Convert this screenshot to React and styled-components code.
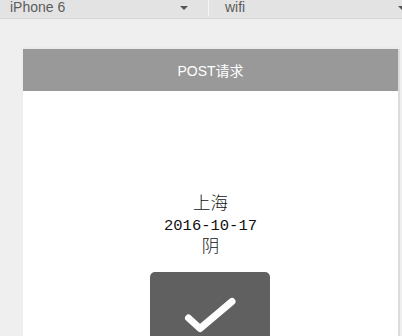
import React from "react";
import styled, { createGlobalStyle } from "styled-components";

const Global = createGlobalStyle`
  html, body { margin: 0; padding: 0; background: #efefef; overflow: hidden; }
  body { width: 402px; height: 336px; font-family: "Liberation Sans", Arial, sans-serif; }
`;

const Page = styled.div`
  width: 402px;
  height: 336px;
  overflow: hidden;
  background: #efefef;
  display: flex;
  flex-direction: column;
`;

const Toolbar = styled.div`
  height: 19px;
  flex: none;
  display: flex;
  background: #e3e3e3;
  border-bottom: 1px solid #d6d6d6;
  box-sizing: border-box;
`;

const Select = styled.div`
  width: ${(p) => p.$w}px;
  flex: none;
  display: flex;
  align-items: center;
  justify-content: space-between;
  padding: 0 ${(p) => p.$pr}px 0 ${(p) => p.$pl}px;
  box-sizing: border-box;
  border-right: ${(p) => (p.$divider ? "1px solid #f4f4f4" : "none")};
  font-size: 14px;
  line-height: 16px;
  color: #5c5c5c;
  position: relative;
  top: -2px;
`;

const Caret = styled.span`
  width: 0;
  height: 0;
  border-left: 4px solid transparent;
  border-right: 4px solid transparent;
  border-top: 4px solid #555;
  position: relative;
  top: 1px;
  right: ${(p) => p.$shift || 0}px;
`;

const Stage = styled.div`
  flex: 1;
  padding: 30px 0 0 23px;
  display: flex;
`;

const Card = styled.div`
  width: 375px;
  flex: none;
  background: #fff;
  display: flex;
  flex-direction: column;
  box-shadow: 2px 0 0 #dcdcdc, 0 -1px 3px rgba(0,0,0,0.04);
`;

const Header = styled.div`
  height: 42px;
  background: #999999;
  color: #fff;
  font-size: 14px;
  display: flex;
  align-items: center;
  justify-content: center;
  font-family: "Liberation Sans", "Noto Sans CJK SC", sans-serif;
`;

const Body = styled.div`
  display: flex;
  flex-direction: column;
  align-items: center;
  padding-top: 103px;
`;

const Info = styled.div`
  display: flex;
  flex-direction: column;
  align-items: center;
  color: #111;
`;

const Line = styled.div`
  font-family: "Liberation Mono", "Noto Sans CJK SC", monospace;
  font-size: ${(p) => (p.$cjk ? 17.5 : 15.5)}px;
  font-weight: ${(p) => (p.$cjk ? 300 : 400)};
  line-height: 21.5px;
  height: 21.5px;
`;

const OkButton = styled.div`
  margin-top: 13px;
  width: 120px;
  height: 90px;
  background: #606060;
  border-radius: 5px;
  margin-left: -1px;
  display: flex;
`;

export default function App() {
  return (
    <Page>
      <Global />
      <Toolbar>
        <Select $w={209} $pl={10} $pr={20} $divider>
          <span>iPhone 6</span>
          <Caret />
        </Select>
        <Select $w={193} $pl={16} $pr={0}>
          <span>wifi</span>
          <Caret $shift={-4} />
        </Select>
      </Toolbar>
      <Stage>
        <Card>
          <Header>POST请求</Header>
          <Body>
            <Info>
              <Line $cjk>上海</Line>
              <Line>2016-10-17</Line>
              <Line $cjk>阴</Line>
            </Info>
            <OkButton>
              <svg width="120" height="90" viewBox="0 0 120 90">
                <path
                  d="M38.5 46 L50 56.5 L82 29.5"
                  fill="none"
                  stroke="#fff"
                  strokeWidth="7"
                  strokeLinecap="round"
                  strokeLinejoin="round"
                />
              </svg>
            </OkButton>
          </Body>
        </Card>
      </Stage>
    </Page>
  );
}
